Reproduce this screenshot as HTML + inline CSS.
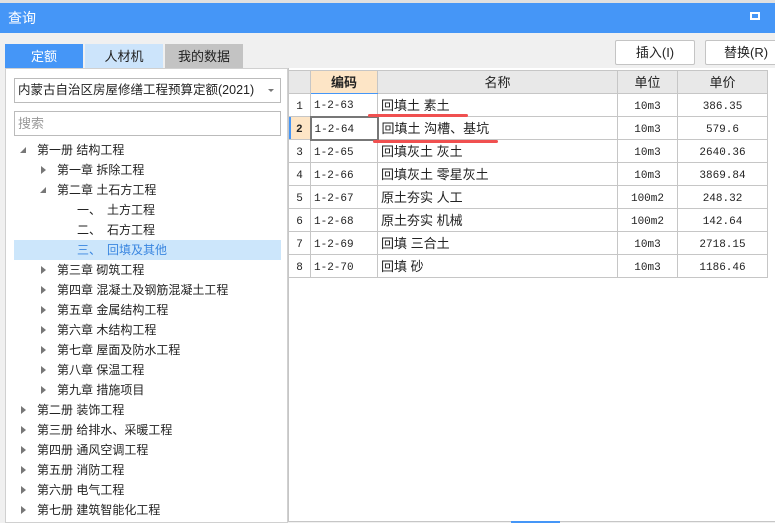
<!DOCTYPE html>
<html><head><meta charset="utf-8"><style>
*{margin:0;padding:0;box-sizing:border-box}
body{width:775px;height:523px;background:#f0f0f0;font-family:"Liberation Sans","Noto Sans CJK SC",sans-serif;font-size:12px;color:#222;position:relative;overflow:hidden}
.a{position:absolute}
.title{left:0;top:3px;width:775px;height:30px;background:#4596f7;color:#fff;font-size:14px;line-height:30px;padding-left:8px}
.tab{top:44px;height:25px;width:78px;text-align:center;line-height:25px;font-size:13px}
.panel{left:5px;top:68px;width:283px;height:455px;background:#fff;border:1px solid #d0d0d0}
.box{left:14px;width:267px;height:25px;border:1px solid #bbb;background:#fff;line-height:23px;padding-left:3px;font-size:13px}
.tr{left:14px;width:267px;height:20px;line-height:20px;font-size:12px}
.tri{position:absolute;top:6px;width:0;height:0;border-top:4px solid transparent;border-bottom:4px solid transparent;border-left:5px solid #777}
.trid{position:absolute;top:7px;width:0;height:0;border-left:6px solid transparent;border-bottom:6px solid #777}
.btn{top:40px;height:25px;background:#fff;border:1px solid #c4c4c4;border-radius:2px;text-align:center;line-height:23px;font-size:13px}
table{position:absolute;left:288px;top:70px;border-collapse:collapse;background:#fff;font-size:12px;table-layout:fixed}
td{border:1px solid #c6c6c6;height:23px;padding:0 3px;white-space:nowrap;line-height:21px;vertical-align:middle;overflow:hidden}
thead td{background:#e8e8e8;text-align:center;font-size:13px}
.c{text-align:center}
.n{font-size:13px}
.m{font-family:"Liberation Mono",monospace;font-size:11px;line-height:18px;padding-top:3px}
</style></head><body>
<div class="a" style="left:0;top:0;width:775px;height:3px;background:#e0e0e0"></div>
<div class="a title">查询</div>
<div class="a" style="left:750px;top:12px;width:10px;height:8px;border:2px solid #fff"></div>
<div class="a tab" style="left:5px;background:#4596f7;color:#fff">定额</div>
<div class="a tab" style="left:85px;background:#cce4fb">人材机</div>
<div class="a tab" style="left:165px;background:#c3c3c3">我的数据</div>
<div class="a btn" style="left:615px;width:80px">插入(I)</div>
<div class="a btn" style="left:705px;width:80px;text-align:left;padding-left:18px">替换(R)</div>
<div class="a panel"></div>
<div class="a box" style="top:78px;font-size:12.5px">内蒙古自治区房屋修缮工程预算定额(2021)<span style="position:absolute;right:6px;top:10px;border-left:3px solid transparent;border-right:3px solid transparent;border-top:3px solid #777"></span></div>
<div class="a box" style="top:111px;color:#999">搜索</div>
<div class="a" style="left:288px;top:68px;width:487px;height:454px;background:#fff;border-left:1px solid #c6c6c6;border-bottom:1px solid #c6c6c6"></div>

<div class="a tr" style="top:140px"><span class="trid" style="left:6px"></span><span style="position:absolute;left:23px">第一册 结构工程</span></div>
<div class="a tr" style="top:160px"><span class="tri" style="left:27px"></span><span style="position:absolute;left:43px">第一章 拆除工程</span></div>
<div class="a tr" style="top:180px"><span class="trid" style="left:26px"></span><span style="position:absolute;left:43px">第二章 土石方工程</span></div>
<div class="a tr" style="top:200px"><span style="position:absolute;left:63px">一、　土方工程</span></div>
<div class="a tr" style="top:220px"><span style="position:absolute;left:63px">二、　石方工程</span></div>
<div class="a tr" style="top:240px;background:#cce6fb;color:#3a86e0"><span style="position:absolute;left:63px">三、　回填及其他</span></div>
<div class="a tr" style="top:260px"><span class="tri" style="left:27px"></span><span style="position:absolute;left:43px">第三章 砌筑工程</span></div>
<div class="a tr" style="top:280px"><span class="tri" style="left:27px"></span><span style="position:absolute;left:43px">第四章 混凝土及钢筋混凝土工程</span></div>
<div class="a tr" style="top:300px"><span class="tri" style="left:27px"></span><span style="position:absolute;left:43px">第五章 金属结构工程</span></div>
<div class="a tr" style="top:320px"><span class="tri" style="left:27px"></span><span style="position:absolute;left:43px">第六章 木结构工程</span></div>
<div class="a tr" style="top:340px"><span class="tri" style="left:27px"></span><span style="position:absolute;left:43px">第七章 屋面及防水工程</span></div>
<div class="a tr" style="top:360px"><span class="tri" style="left:27px"></span><span style="position:absolute;left:43px">第八章 保温工程</span></div>
<div class="a tr" style="top:380px"><span class="tri" style="left:27px"></span><span style="position:absolute;left:43px">第九章 措施项目</span></div>
<div class="a tr" style="top:400px"><span class="tri" style="left:7px"></span><span style="position:absolute;left:23px">第二册 装饰工程</span></div>
<div class="a tr" style="top:420px"><span class="tri" style="left:7px"></span><span style="position:absolute;left:23px">第三册 给排水、采暖工程</span></div>
<div class="a tr" style="top:440px"><span class="tri" style="left:7px"></span><span style="position:absolute;left:23px">第四册 通风空调工程</span></div>
<div class="a tr" style="top:460px"><span class="tri" style="left:7px"></span><span style="position:absolute;left:23px">第五册 消防工程</span></div>
<div class="a tr" style="top:480px"><span class="tri" style="left:7px"></span><span style="position:absolute;left:23px">第六册 电气工程</span></div>
<div class="a tr" style="top:500px"><span class="tri" style="left:7px"></span><span style="position:absolute;left:23px">第七册 建筑智能化工程</span></div>

<table>
<colgroup><col style="width:22px"><col style="width:67px"><col style="width:240px"><col style="width:60px"><col style="width:90px"></colgroup>
<thead><tr><td></td><td style="background:#fde5c6;font-weight:bold;border-bottom:1px solid #4596f7">编码</td><td>名称</td><td>单位</td><td>单价</td></tr></thead>
<tbody>
<tr><td class="c m">1</td><td class="m">1-2-63</td><td class="n">回填土 素土</td><td class="c m">10m3</td><td class="c m">386.35</td></tr>
<tr><td class="c m" style="background:#fde5c6;font-weight:bold;box-shadow:inset 2px 0 #4596f7">2</td><td class="m" style="border:2px solid #777">1-2-64</td><td class="n">回填土 沟槽、基坑</td><td class="c m">10m3</td><td class="c m">579.6</td></tr>
<tr><td class="c m">3</td><td class="m">1-2-65</td><td class="n">回填灰土 灰土</td><td class="c m">10m3</td><td class="c m">2640.36</td></tr>
<tr><td class="c m">4</td><td class="m">1-2-66</td><td class="n">回填灰土 零星灰土</td><td class="c m">10m3</td><td class="c m">3869.84</td></tr>
<tr><td class="c m">5</td><td class="m">1-2-67</td><td class="n">原土夯实 人工</td><td class="c m">100m2</td><td class="c m">248.32</td></tr>
<tr><td class="c m">6</td><td class="m">1-2-68</td><td class="n">原土夯实 机械</td><td class="c m">100m2</td><td class="c m">142.64</td></tr>
<tr><td class="c m">7</td><td class="m">1-2-69</td><td class="n">回填 三合土</td><td class="c m">10m3</td><td class="c m">2718.15</td></tr>
<tr><td class="c m">8</td><td class="m">1-2-70</td><td class="n">回填 砂</td><td class="c m">10m3</td><td class="c m">1186.46</td></tr>
</tbody></table>
<div class="a" style="left:368px;top:114px;width:100px;height:3px;background:#f05050;border-radius:2px"></div>
<div class="a" style="left:373px;top:140px;width:125px;height:3px;background:#f05050;border-radius:2px"></div>
<div class="a" style="left:511px;top:521px;width:49px;height:2px;background:#4596f7"></div>
</body></html>
